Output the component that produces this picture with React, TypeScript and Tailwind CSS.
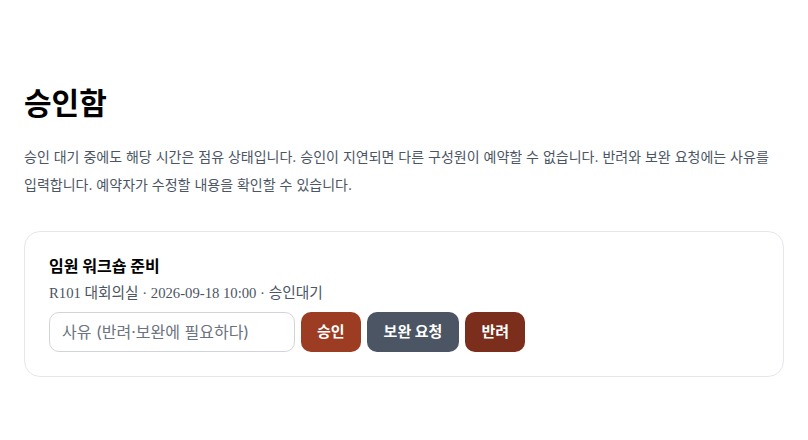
import React from "react";

const sans = "font-['Inter','Noto_Sans_CJK_KR',sans-serif]";

export default function App() {
  return (
    <main className={`min-h-screen bg-white px-6 pt-[85px] text-black ${sans}`}>
      <h1 className="text-[30px] font-bold leading-9">승인함</h1>
      <p className="mt-[22px] text-sm leading-7 text-[#4b5563]">
        승인 대기 중에도 해당 시간은 점유 상태입니다. 승인이 지연되면 다른 구성원이 예약할 수 없습니다. 반려와 보완 요청에는 사유를
        입력합니다. 예약자가 수정할 내용을 확인할 수 있습니다.
      </p>

      <section className="mt-8 rounded-2xl border border-[#e5e7eb] px-6 pb-6 pt-[22px]">
        <h2 className="text-base font-bold leading-6">임원 워크숍 준비</h2>
        <div className="mt-1 text-[14.7px] leading-[22px] text-[#4b5563] font-['Liberation_Serif','Noto_Sans_CJK_KR',serif]">
          R101 대회의실 · 2026-09-18 10:00 · 승인대기
        </div>
        <div className="mt-2 flex items-center gap-1.5">
          <input
            className="h-10 w-[246px] rounded-[10px] border border-[#d1d5db] px-3 text-base text-[#111827] outline-none placeholder:text-[#6b7280]"
            placeholder="사유 (반려·보완에 필요하다)"
          />
          <button className="h-10 rounded-[10px] bg-[#9b3c23] px-4 text-[15px] font-bold text-white">승인</button>
          <button className="h-10 rounded-[10px] bg-[#4b5563] px-[17px] text-[15px] font-bold text-white">보완 요청</button>
          <button className="h-10 rounded-[10px] bg-[#7b2e1b] px-4 text-[15px] font-bold text-white">반려</button>
        </div>
      </section>
    </main>
  );
}
